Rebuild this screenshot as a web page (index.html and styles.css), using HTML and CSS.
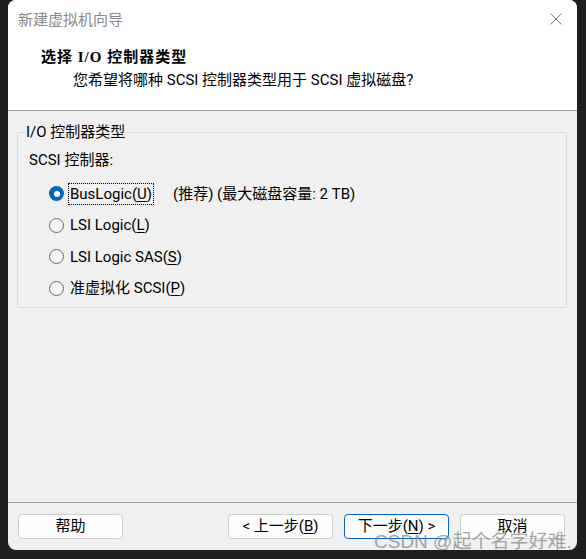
FILE: index.html
```html
<!DOCTYPE html>
<html lang="zh-CN">
<head>
<meta charset="utf-8">
<title>新建虚拟机向导</title>
<link rel="stylesheet" href="styles.css">
</head>
<body>
<div class="window">
  <div class="titlebar">
    <span class="title">新建虚拟机向导</span>
    <svg class="close" width="12" height="12" viewBox="0 0 12 12"><path d="M0.5 0.5 L11.5 11.5 M11.5 0.5 L0.5 11.5" stroke="#7a7a7a" stroke-width="1" fill="none"/></svg>
  </div>
  <div class="header">
    <div class="heading">选择 I/O 控制器类型</div>
    <div class="subtitle">您希望将哪种 SCSI 控制器类型用于 SCSI 虚拟磁盘?</div>
  </div>
  <div class="content">
    <fieldset class="group">
      <legend>I/O 控制器类型</legend>
      <div class="caption">SCSI 控制器:</div>
      <div class="options">
        <div class="option">
          <span class="opt-main"><span class="radio checked"></span><span class="label focus">BusLogic(<u>U</u>)</span></span>
          <span class="note">(推荐) (最大磁盘容量: 2 TB)</span>
        </div>
        <div class="option">
          <span class="opt-main"><span class="radio"></span><span class="label">LSI Logic(<u>L</u>)</span></span>
        </div>
        <div class="option">
          <span class="opt-main"><span class="radio"></span><span class="label">LSI Logic SAS(<u>S</u>)</span></span>
        </div>
        <div class="option">
          <span class="opt-main"><span class="radio"></span><span class="label">准虚拟化 SCSI(<u>P</u>)</span></span>
        </div>
      </div>
    </fieldset>
  </div>
  <div class="footer">
    <button class="btn">帮助</button>
    <div class="spacer"></div>
    <button class="btn">&lt; 上一步(<u>B</u>)</button>
    <button class="btn default">下一步(<u>N</u>) &gt;</button>
    <button class="btn">取消</button>
  </div>
</div>
<div class="watermark">CSDN @起个名字好难.</div>
</body>
</html>
```
FILE: styles.css
```css
html, body {
  margin: 0;
  padding: 0;
  background: #1f1f1f;
}
body {
  position: relative;
  width: 586px;
  height: 559px;
  overflow: hidden;
  font-family: "Roboto", "Noto Sans CJK SC", sans-serif;
  font-size: 15px;
  color: #000;
}
.window {
  margin-left: 8px;
  width: 569px;
  height: 550px;
  border-radius: 8px;
  overflow: hidden;
  background: #f0f0f0;
  display: flex;
  flex-direction: column;
}
.titlebar {
  height: 40px;
  flex: none;
  background: #fff;
  display: flex;
  align-items: center;
  justify-content: space-between;
  padding: 0 15px 0 10px;
}
.title {
  color: #8a8a8a;
  line-height: 20px;
}
.close {
  display: block;
  margin-top: -2px;
}
.header {
  height: 70px;
  flex: none;
  background: #fff;
  border-bottom: 1px solid #a0a0a0;
}
.heading {
  padding-top: 7px;
  padding-left: 33px;
  line-height: 20px;
  font-family: "Liberation Serif", "Noto Sans CJK SC", serif;
  font-weight: bold;
  letter-spacing: 1px;
}
.subtitle {
  margin-top: 3px;
  padding-left: 65px;
  line-height: 20px;
}
.content {
  flex: 1;
  padding: 12px 10px 0 9px;
}
.group {
  margin: 0;
  padding: 0;
  border: 1px solid #dcdcdc;
  min-inline-size: 0;
}
.group legend {
  margin-left: 7px;
  padding: 0 1px;
  line-height: 18px;
}
.caption {
  margin-top: 9px;
  padding-left: 11px;
  line-height: 20px;
}
.options {
  margin-top: 8px;
  padding-bottom: 3px;
  display: flex;
  flex-direction: column;
}
.option {
  height: 31.5px;
  display: flex;
  align-items: center;
  padding-left: 31px;
}
.opt-main {
  width: 124px;
  display: flex;
  align-items: center;
  flex: none;
}
.radio {
  width: 15px;
  height: 15px;
  box-sizing: border-box;
  border: 1px solid #686868;
  border-radius: 50%;
  background: #f5f5f5;
  flex: none;
  display: flex;
  align-items: center;
  justify-content: center;
}
.radio.checked {
  border: none;
  background: #0067c0;
}
.radio.checked::after {
  content: "";
  width: 6px;
  height: 6px;
  border-radius: 50%;
  background: #fff;
}
.label {
  margin-left: 4px;
  line-height: 20px;
  padding: 0 1px;
  border: 1px solid transparent;
  white-space: nowrap;
}
.label.focus {
  border: 1px dotted #000;
}
.note {
  line-height: 20px;
  white-space: nowrap;
}
u {
  text-decoration-thickness: 1px;
  text-underline-offset: 2px;
}
.footer {
  flex: none;
  height: 47px;
  border-top: 1px solid #a0a0a0;
  display: flex;
  align-items: center;
  padding: 0 12px 0 10px;
  gap: 11px;
}
.spacer {
  flex: 1;
}
.btn {
  width: 105px;
  height: 25px;
  box-sizing: border-box;
  border: 1px solid #d0d0d0;
  border-radius: 4px;
  background: #fdfdfd;
  font-family: "Roboto", "Noto Sans CJK SC", sans-serif;
  font-size: 15px;
  color: #000;
  padding: 0;
  line-height: 21px;
}
.btn.default {
  border-color: #0067c0;
}
.watermark {
  position: absolute;
  left: 374px;
  top: 530px;
  font-family: "Liberation Sans", "Noto Sans CJK SC", sans-serif;
  font-size: 19px;
  line-height: 24px;
  color: rgba(125, 125, 125, 0.7);
  white-space: nowrap;
}
```
